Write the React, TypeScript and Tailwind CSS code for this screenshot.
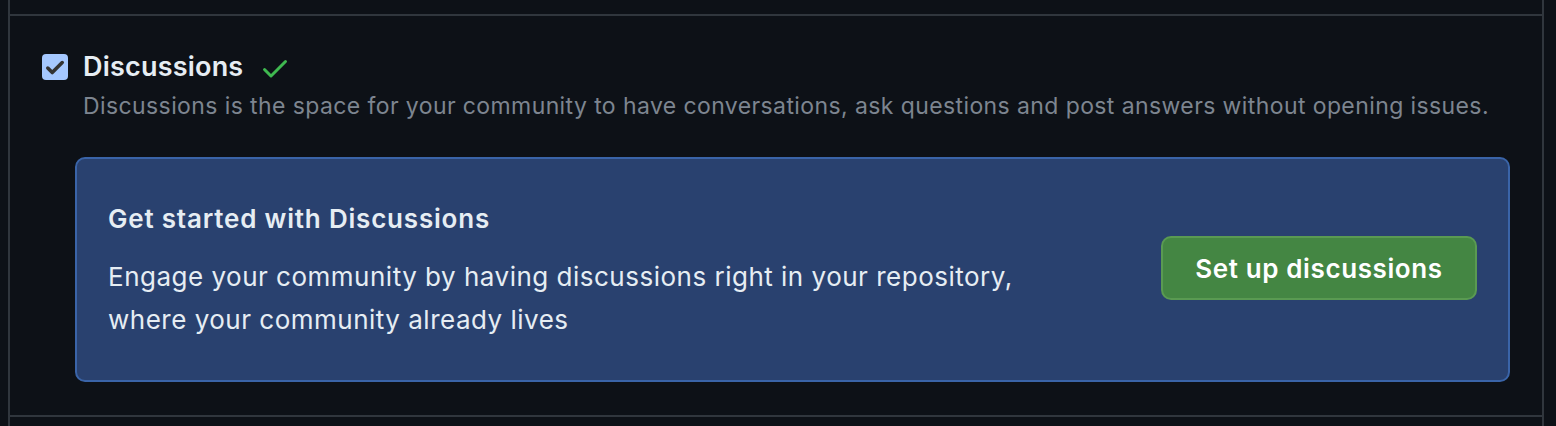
import React from "react";

export default function App() {
  return (
    <div
      className="w-[1556px] h-[426px] bg-[#0d1117] overflow-hidden"
      style={{ fontFamily: "Inter, 'Noto Sans', sans-serif" }}
    >
      <div className="ml-[8px] w-[1536px] h-full border-x-2 border-[#30363d] flex flex-col">
        <div className="h-[14px] shrink-0" />
        <div className="border-y-2 border-[#30363d] pt-[36px] pb-[33px] pl-[32px] pr-[32px]">
          <div className="flex items-start">
            <div className="w-[26px] h-[26px] mt-[2px] rounded-[4px] bg-[#a5c8ff] flex items-center justify-center shrink-0">
              <svg width="22" height="22" viewBox="0 0 16 16" fill="#333">
                <path d="M13.78 4.22a.75.75 0 0 1 0 1.06l-7.25 7.25a.75.75 0 0 1-1.06 0L2.22 9.28a.751.751 0 0 1 1.06-1.06L6 10.94l6.72-6.72a.75.75 0 0 1 1.06 0Z" stroke="#333" strokeWidth="1.1" />
              </svg>
            </div>
            <div className="ml-[15px] flex flex-col">
              <div className="flex items-center h-[30px]">
                <span className="text-[27px] font-semibold text-[#e6edf3] leading-[30px] tracking-[0.2px]">Discussions</span>
                <svg className="ml-[16px] mt-[2px]" width="32" height="32" viewBox="0 0 16 16" fill="#3fb950">
                  <path d="M13.78 4.22a.75.75 0 0 1 0 1.06l-7.25 7.25a.75.75 0 0 1-1.06 0L2.22 9.28a.751.751 0 0 1 1.06-1.06L6 10.94l6.72-6.72a.75.75 0 0 1 1.06 0Z" />
                </svg>
              </div>
              <p className="mt-[10px] text-[23px] leading-[28px] tracking-[0.4px] text-[#7d8590]">
                Discussions is the space for your community to have conversations, ask questions and post answers without opening issues.
              </p>
            </div>
          </div>
          <div className="mt-[37px] ml-[33px] h-[225px] rounded-[10px] border-2 border-[#3a64a8] bg-[#29416f] flex items-start justify-between pt-[43px] pl-[31px] pr-[31px]">
            <div className="flex flex-col">
              <h3 className="text-[26px] font-semibold leading-[34px] tracking-[0.8px] text-[#e6edf3]">Get started with Discussions</h3>
              <p className="mt-[19px] text-[26px] leading-[43px] tracking-[0.5px] text-[#e6edf3]">
                Engage your community by having discussions right in your repository,
                <br />
                where your community already lives
              </p>
            </div>
            <button className="mt-[34px] w-[316px] h-[64px] rounded-[10px] border-2 border-[#5a9a52] bg-[#448643] text-white text-[26px] font-semibold tracking-[0.6px]">
              Set up discussions
            </button>
          </div>
        </div>
      </div>
    </div>
  );
}
